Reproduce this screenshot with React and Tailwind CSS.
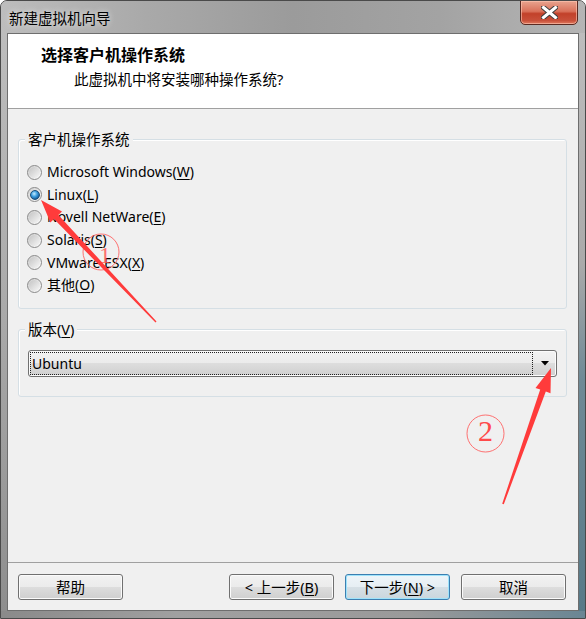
import React from "react";

const FONT = "font-['Noto_Sans','Noto_Sans_CJK_SC',sans-serif]";

function Radio({ checked }) {
  return (
    <span className="w-[15px] h-[15px] rounded-full border border-[#8a8a8a] bg-[linear-gradient(135deg,#cfcfcf,#ffffff)] flex items-center justify-center shrink-0">
      {checked ? (
        <span className="w-[10px] h-[10px] rounded-full border border-[#1b4f7a] bg-[radial-gradient(circle_at_40%_35%,#c6ecff_0%,#3b9ee0_40%,#12548f_80%,#0c3a66_100%)]" />
      ) : (
        <span className="w-[11px] h-[11px] rounded-full bg-[linear-gradient(135deg,#c4c4c4,#f7f7f7)]" />
      )}
    </span>
  );
}

function U({ children }) {
  return <span className="underline underline-offset-[2px] decoration-1">{children}</span>;
}

function RadioRow({ checked, children }) {
  return (
    <div className="h-[22.6px] flex items-center">
      <div className="ml-[8px]">
        <Radio checked={checked} />
      </div>
      <span className="ml-[5px] text-[14px] leading-[20px] text-black whitespace-nowrap">{children}</span>
    </div>
  );
}

function Button({ children, primary }) {
  return (
    <div
      className={
        "w-[105px] h-[26px] rounded-[3px] border flex items-center justify-center text-[14.5px] leading-none text-black whitespace-nowrap " +
        (primary
          ? "border-[#3c7fb1] shadow-[inset_0_0_0_1px_#9ee3fb] bg-[linear-gradient(to_bottom,#eef5f9_0%,#e6eef3_50%,#d6e0e6_50%,#cad6dd_100%)]"
          : "border-[#707070] shadow-[inset_0_0_0_1px_#fbfbfb] bg-[linear-gradient(to_bottom,#f2f2f2_0%,#ebebeb_50%,#dddddd_50%,#cfcfcf_100%)]")
      }
    >
      {children}
    </div>
  );
}

function GroupBox({ label, className, children }) {
  return (
    <div className={"relative rounded-[3px] border border-[#d5dfe5] shadow-[inset_1px_1px_0_#ffffff] " + className}>
      <span className="absolute left-[6px] -top-[11px] px-[3px] bg-[#f0f0f0] text-[14.5px] leading-[20px] text-black whitespace-nowrap">
        {label}
      </span>
      {children}
    </div>
  );
}

export default function App() {
  return (
    <div className={"w-[586px] h-[619px] " + FONT}>
      <div className="relative w-[586px] h-[619px] border border-[#4a4a4a] rounded-t-[7px] overflow-hidden flex flex-col bg-[linear-gradient(to_right,#b9b9b9,#ababab_30%,#9a9a9a_55%,#a8a8a8_80%,#bcbcbc)]">
        {/* Title bar */}
        <div className="h-[32px] flex items-start bg-[linear-gradient(to_right,#bdbdbd_0%,#a9a9a9_25%,#9b9b9b_50%,#a3a3a3_75%,#b5b5b5_100%)]">
          <span className="ml-[8px] mt-[7px] text-[14.5px] leading-[20px] text-black whitespace-nowrap [text-shadow:0_0_6px_rgba(255,255,255,0.8)]">
            新建虚拟机向导
          </span>
          <div className="ml-auto mr-[7px] -mt-[1px] w-[58px] h-[25px] rounded-b-[5px] border border-[#5a2a22] bg-[linear-gradient(to_bottom,#e9a48f_0%,#d9715a_45%,#c2412a_55%,#c8503a_85%,#e07a5f_100%)] shadow-[inset_0_0_0_1px_rgba(255,200,180,0.6)] flex items-center justify-center">
            <svg width="17" height="13" viewBox="0 0 17 13">
              <path d="M2.5 1.5 L14.5 11.5 M14.5 1.5 L2.5 11.5" stroke="#3d3d3d" strokeWidth="5" strokeLinecap="square" fill="none" />
              <path d="M2.5 1.5 L14.5 11.5 M14.5 1.5 L2.5 11.5" stroke="#ffffff" strokeWidth="3" strokeLinecap="square" fill="none" />
            </svg>
          </div>
        </div>

        {/* Body row */}
        <div className="flex h-[578px]">
          <div className="w-[6px] bg-[linear-gradient(to_bottom,#bdbdbd,#a9a9a9_50%,#8e8e8e)]" />
          {/* Client */}
          <div className="w-[572px] h-[578px] border border-[#6e6e6e] bg-[#f0f0f0] flex flex-col">
            {/* Header */}
            <div className="h-[74px] bg-white flex flex-col">
              <span className="mt-[11px] ml-[33px] text-[16px] font-bold leading-[20px] text-black whitespace-nowrap">
                选择客户机操作系统
              </span>
              <span className="mt-[4px] ml-[66px] text-[14.5px] leading-[20px] text-black whitespace-nowrap">
                此虚拟机中将安装哪种操作系统?
              </span>
            </div>
            <div className="h-px bg-[#a0a0a0]" />

            {/* Content */}
            <div className="h-[453px] flex flex-col">
              <GroupBox label="客户机操作系统" className="mt-[30px] ml-[10px] w-[549px] h-[170px]">
                <div className="pt-[21px] flex flex-col">
                  <RadioRow>
                    Microsoft Windows(<U>W</U>)
                  </RadioRow>
                  <RadioRow checked>
                    Linux(<U>L</U>)
                  </RadioRow>
                  <RadioRow>
                    Novell NetWare(<U>E</U>)
                  </RadioRow>
                  <RadioRow>
                    Solaris(<U>S</U>)
                  </RadioRow>
                  <RadioRow>
                    VMware ESX(<U>X</U>)
                  </RadioRow>
                  <RadioRow>
                    其他(<U>O</U>)
                  </RadioRow>
                </div>
              </GroupBox>

              <GroupBox
                label={
                  <>
                    版本(<U>V</U>)
                  </>
                }
                className="mt-[20px] ml-[10px] w-[549px] h-[68px]"
              >
                <div className="mt-[20px] ml-[9px] w-[529px] h-[27px] rounded-[3px] border border-[#707070] shadow-[inset_0_0_0_1px_#fbfbfb] bg-[linear-gradient(to_bottom,#f2f2f2_0%,#ebebeb_50%,#dddddd_50%,#cfcfcf_100%)] flex items-stretch">
                  <div className="flex-1 m-[1px] border border-dotted border-[#202020] flex items-center pl-[1px]">
                    <span className="text-[14px] leading-none text-black">Ubuntu</span>
                  </div>
                  <div className="w-[22px] flex items-center justify-center">
                    <svg width="8" height="5" viewBox="0 0 8 5">
                      <path d="M0 0 H8 L4 4.5 Z" fill="#000" />
                    </svg>
                  </div>
                </div>
              </GroupBox>
            </div>

            <div className="h-px bg-[#a0a0a0]" />

            {/* Buttons */}
            <div className="h-[47px] flex items-start pt-[11px] pl-[10px] pr-[12px]">
              <Button>帮助</Button>
              <div className="ml-auto flex gap-[11px]">
                <Button>
                  &lt; 上一步(<U>B</U>)
                </Button>
                <Button primary>
                  下一步(<U>N</U>) &gt;
                </Button>
                <Button>取消</Button>
              </div>
            </div>
          </div>
          <div className="w-[6px] bg-[linear-gradient(to_bottom,#bdbdbd,#aaaaaa_40%,#6f8a96_60%,#587a88)]" />
        </div>
        <div className="h-[7px] bg-[linear-gradient(to_right,#8a8a8a,#a0a0a0_30%,#9a9a9a_70%,#6a8694)]" />

        {/* Annotations */}
        <svg className="absolute left-0 top-0 pointer-events-none" width="586" height="619" viewBox="0 0 586 619">
          <circle cx="100" cy="251" r="18" fill="none" stroke="#ff5a5a" strokeWidth="1" opacity="0.85" />
          <text x="104" y="262" textAnchor="middle" fontFamily="'Liberation Serif', serif" fontSize="24" fill="#ff5a5a" opacity="0.85">1</text>
          <polygon
            points="40,199 61,210.5 57.4,213.9 155.5,320.5 154.5,321.5 53,218.1 49.4,221.5"
            fill="#ff3b3b"
          />
          <circle cx="484.5" cy="432.5" r="18.5" fill="none" stroke="#ff5a5a" strokeWidth="1" opacity="0.85" />
          <text x="484.5" y="440" textAnchor="middle" fontFamily="'Liberation Serif', serif" fontSize="30" fill="#ff4a4a">2</text>
          <polygon
            points="550,367 549.5,392.3 544.8,390.6 502.8,503.3 501.2,502.7 539.2,388.6 534.5,386.9"
            fill="#ff3b3b"
          />
        </svg>
      </div>
    </div>
  );
}
